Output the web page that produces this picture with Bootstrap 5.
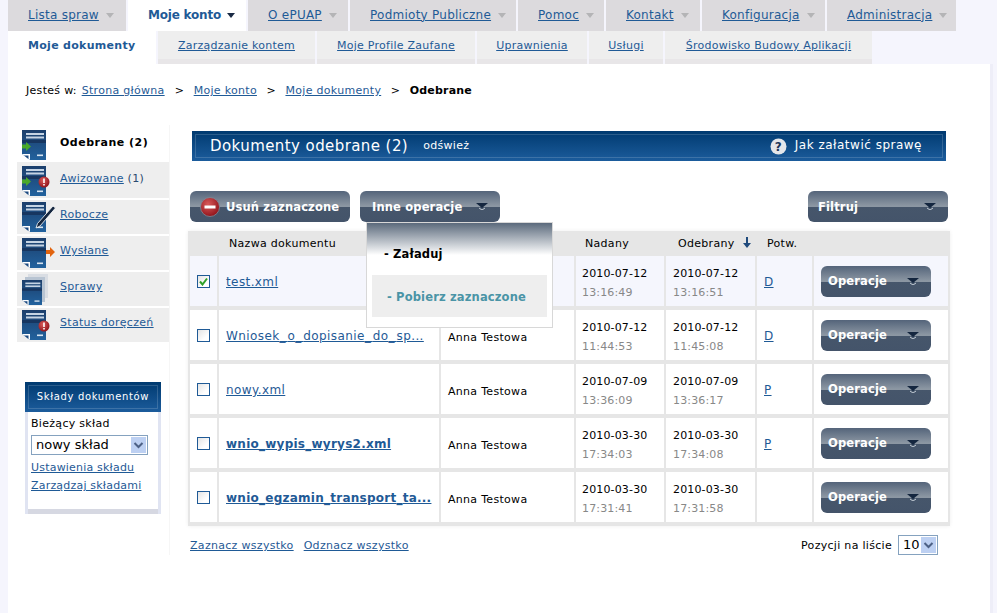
<!DOCTYPE html>
<html lang="pl">
<head>
<meta charset="utf-8">
<title>Dokumenty odebrane</title>
<link href="https://cdn.jsdelivr.net/npm/bootstrap@5.3.0/dist/css/bootstrap.min.css" rel="stylesheet">
<style>
html,body{height:613px;overflow:hidden}
body{background:#f5f5fd;font-family:"DejaVu Sans",Verdana,sans-serif;font-size:11px;line-height:1.3;color:#000;padding:0 4px 0 8px;letter-spacing:.3px}
a{color:#1f5a96}
.sprite{width:0;height:0;display:block}
.top-tabs{display:grid;grid-template-columns:118px 118px 100px 166px 86px 94px 123px 129px;gap:2px;height:31px;background:#f5f5fd}
.top-tab{background:#dcdadd;display:flex;align-items:center;font-size:12px;padding-left:20px;gap:7px;letter-spacing:.25px}
.top-tab.on{background:#fff;font-weight:700;gap:6px;letter-spacing:-.2px}
.top-tab.on a{text-decoration:none}
.tri{width:0;height:0;border-left:4.5px solid transparent;border-right:4.5px solid transparent;border-top:5px solid #b4b4b6}
.top-tab.on .tri{border-top-color:#1a2a44}
.sub-tabs{display:grid;grid-template-columns:148px 157px 158px 110px 74px 207px;gap:2px;width:864px;height:33px}
.sub-tab{background:linear-gradient(#eee 0,#eee 28px,#e8e6e8 28px);display:flex;align-items:center;justify-content:center;padding-bottom:3px;letter-spacing:.25px}
.sub-tab.on{background:#fff;font-weight:700;justify-content:flex-start;padding-left:20px;color:#1f5a96;letter-spacing:.3px}
.panel{background:#fff;height:560px;width:982px;box-shadow:3px 0 0 #eeeef8}
.crumb{padding:20px 0 0 18px;height:61px;display:flex;align-items:flex-start}
.crumb .sep{margin:0 10px}
.crumb .sep-a{margin:0 9.5px 0 10px}
.crumb .sep-b{margin:0 9.5px}
.crumb .gap-a{margin-left:1px}
.crumb b{letter-spacing:.2px}
.side{width:152px;margin-left:9px;flex:none;box-shadow:1px 0 0 #f6f6f6}
.side-item{display:flex;background:#eee;height:34px;margin-bottom:2px;padding:2px 0 0 5px;gap:11px}
.side-item.first{background:#fff;height:37px;margin:0;padding-top:5px}
.side-item.second{height:36px;padding-top:4px}
.side-item .lbl{padding-top:6px}
.side-item.first .lbl{font-weight:700;letter-spacing:.5px}
.lbl-n{color:#2a4a70}
.side-ico{width:27px;height:32px;flex:none;display:block;overflow:visible}
.store{margin:40px 0 0 8px;width:136px;height:132px;background:#fff;box-shadow:inset 3px 0 0 #e0e4f2,inset -3px 0 0 #e0e4f2,inset 0 -5px 0 #d6d8e2}
.store-head{height:30px;background:linear-gradient(#003a70,#1c5c9c);padding:3px}
.store-head div{height:24px;border:1px solid rgba(255,255,255,.16);color:#fff;font-size:10px;text-align:center;line-height:22px;letter-spacing:.65px}
.store-body{padding:5px 6px}
.store-body a{display:block;line-height:18px;letter-spacing:.2px}
.sel-wrap{position:relative;display:block;border:1px solid #85a2bf;background:#fff;height:20px}
.sel-wrap select{appearance:none;-webkit-appearance:none;border:0;background:transparent;width:100%;height:18px;font:13px/18px "DejaVu Sans",sans-serif;padding:0 0 0 4px;color:#000;letter-spacing:0;outline:0}
.sel-arrow{position:absolute;right:1px;top:1px;width:15px;height:16px;pointer-events:none}
.sel-big{width:117px;margin:4px 0 4px}
.sel-small{width:40px;margin-top:-2px}
.main{margin-left:19px;width:762px;position:relative}
.title-bar{margin:6px 0 0 4px;width:754px;height:30px;background:linear-gradient(#003a70,#1c5c9c);padding:3px;color:#fff}
.title-in{height:24px;border:1px solid rgba(255,255,255,.16);display:flex;align-items:center;padding:0 20px 0 14px}
.title-in h1{font-size:15px;font-weight:400;margin:0 15px 0 0;letter-spacing:.42px}
.title-help{margin-left:auto;display:flex;align-items:center;gap:8px;font-size:12px;letter-spacing:.5px}
.tool-row{display:flex;margin:30px 0 9px 2px;width:758px;height:31px}
.btn-slate{position:relative;display:flex;align-items:center;height:31px;border:0;border-radius:6px;padding:2px 0 0 10px;color:#fff;font-weight:700;font-size:11.5px;letter-spacing:.15px;background:linear-gradient(#54647a 0,#8c97a3 15px,#8c97a3 15.5px,#46566b 16px,#44546a 100%)}
.btn-slate:hover,.btn-slate:active{color:#fff;background:linear-gradient(#54647a 0,#8c97a3 15px,#46566b 16px,#44546a 100%)}
.btn-slate svg:first-child{margin-top:-2px}
.btn-del{width:160px;gap:6px}
.btn-other{width:140px;padding-left:12px}
.btn-filter{width:140px;margin-left:auto}
.btn-op{width:110px;padding-left:7px;padding-right:0}
.caret-x{position:absolute;right:12px;top:14px;width:12px;height:7px}
.btn-gap{margin-left:10px}
.drop-host{position:relative}
.menu-x.dropdown-menu{left:6px;top:31px;width:187px;height:106px;margin:0;padding:0;border:1px solid #d8d8d8;border-radius:0;min-width:0;background:linear-gradient(#5b6a7c 0,#fff 32px);font-size:11.5px;letter-spacing:.15px;z-index:5}
.menu-load{padding:24px 0 0 17px;font-weight:700;height:52px;color:#000}
.menu-get{margin:0 5px;height:42px;background:#eee;color:#4a94a6;font-weight:700;display:flex;align-items:center;padding:2px 0 0 15px}
.docs{width:762px;table-layout:fixed;border-collapse:separate;border-spacing:2px 4px;background:#e6e6e6;box-shadow:0 0 4px #eee}
.docs th{font-weight:400;height:17px;padding:1px 0 0 10px;vertical-align:middle;white-space:nowrap}
.docs th.hd-sent{padding-left:9px}
.docs th.hd-rec{padding-left:12px}
.docs td{background:#fff;height:50px;vertical-align:middle;padding:4px 0 0 7px;white-space:nowrap;overflow:hidden}
.docs td:first-child,.docs td:last-child{padding-top:0}
.docs tr.sel td{background:#f5f6fd}
.docs .c1{width:27px}.docs .c2{width:220px}.docs .c3{width:133px}.docs .c4{width:88px}.docs .c5{width:89px}.docs .c6{width:55px}.docs .c7{width:134px}
.doc-name{font-size:12px;letter-spacing:.4px}
.doc-name.bold{font-weight:700;letter-spacing:.25px}
.us{letter-spacing:2px}
.doc-name.bold .us{letter-spacing:.25px}
.docs td.who{padding-top:6px}
.when{line-height:19px;letter-spacing:.15px}
.docs td.when-a{padding-left:6px}
.when span{color:#888;display:block}
.docs td.conf{padding-left:7px;font-size:12px}
.chk{appearance:none;-webkit-appearance:none;display:block;margin:0;width:13px;height:13px;border:1px solid #1f5a96;background:linear-gradient(135deg,#e4e4e4,#fff 70%);position:relative}
.chk-on{display:block;position:relative;width:13px;height:13px}
.chk-on svg{position:absolute;left:2px;top:2px;width:9px;height:9px}
.foot{display:flex;align-items:flex-start;width:748px;margin:11px 0 0 2px}
.foot>a{margin-right:10px;padding-top:2px}
.foot .count{margin-left:auto;display:flex;align-items:center;gap:6px}
.sort{margin-left:8px;vertical-align:-1px}
</style>
</head>
<body>
<svg class="sprite" aria-hidden="true">
<defs>
<linearGradient id="pg" x1="0" y1="0" x2="0" y2="1"><stop offset="0" stop-color="#1c3f6c"/><stop offset="1" stop-color="#22629e"/></linearGradient>
<radialGradient id="rd" cx=".4" cy=".35" r=".7"><stop offset="0" stop-color="#d85a5a"/><stop offset="1" stop-color="#8e1018"/></radialGradient>
<symbol id="page" viewBox="0 0 24 30">
<path d="M0 0H24V30H8L0 24Z" fill="url(#pg)"/>
<path d="M0 24H8V30Z" fill="#fff"/><path d="M2 25.5H6.500V29Z" fill="#1d4a80"/>
<rect x="4" y="3" width="18" height="2" fill="#c5d4e4"/><rect x="4" y="6.500" width="18" height="2" fill="#c5d4e4"/>
<rect x="0" y="10" width="24" height="3" fill="#173660"/>
<rect x="15" y="24.500" width="6" height="1.600" fill="#d8e4f0"/>
</symbol>
</defs>
</svg>
<div class="top-tabs">
<div class="top-tab"><a href="#">Lista spraw</a><i class="tri"></i></div>
<div class="top-tab on"><a href="#">Moje konto</a><i class="tri"></i></div>
<div class="top-tab"><a href="#">O ePUAP</a><i class="tri"></i></div>
<div class="top-tab"><a href="#">Podmioty Publiczne</a><i class="tri"></i></div>
<div class="top-tab"><a href="#">Pomoc</a><i class="tri"></i></div>
<div class="top-tab"><a href="#">Kontakt</a><i class="tri"></i></div>
<div class="top-tab"><a href="#">Konfiguracja</a><i class="tri"></i></div>
<div class="top-tab"><a href="#">Administracja</a><i class="tri"></i></div>
</div>
<div class="sub-tabs">
<div class="sub-tab on">Moje dokumenty</div>
<div class="sub-tab"><a href="#">Zarządzanie kontem</a></div>
<div class="sub-tab"><a href="#">Moje Profile Zaufane</a></div>
<div class="sub-tab"><a href="#">Uprawnienia</a></div>
<div class="sub-tab"><a href="#">Usługi</a></div>
<div class="sub-tab"><a href="#">Środowisko Budowy Aplikacji</a></div>
</div>
<div class="panel">
<div class="crumb">Jesteś w:&nbsp;<a class="gap-a" href="#">Strona główna</a><span class="sep sep-a">&gt;</span><a href="#">Moje konto</a><span class="sep sep-b">&gt;</span><a href="#">Moje dokumenty</a><span class="sep sep-b">&gt;</span><b>Odebrane</b></div>
<div class="d-flex">
<div class="side">
<div class="side-item first"><svg class="side-ico" viewBox="0 0 27 32"><use href="#page" width="24" height="30"/><path d="M0 14.500H4V12L9 16.500L4 21V18.500H0Z" fill="#4aaa2a"/></svg><span class="lbl">Odebrane (2)</span></div>
<div class="side-item second"><svg class="side-ico" viewBox="0 0 27 32"><use href="#page" width="24" height="30"/><path d="M0 13.500H4V11L9 15.500L4 20V17.500H0Z" fill="#4aaa2a"/><circle cx="22" cy="16" r="5.500" fill="url(#rd)"/><rect x="21.200" y="12.500" width="1.600" height="4.500" fill="#fff"/><rect x="21.200" y="18" width="1.600" height="1.500" fill="#fff"/></svg><span class="lbl"><a href="#">Awizowane</a> <span class="lbl-n">(1)</span></span></div>
<div class="side-item"><svg class="side-ico" viewBox="0 0 27 32"><use href="#page" width="24" height="30"/><path d="M31 4L33.500 6L18 24L14 26L15.500 21.500Z" fill="#14263f" stroke="#fff" stroke-width=".8"/></svg><span class="lbl"><a href="#">Robocze</a></span></div>
<div class="side-item"><svg class="side-ico" viewBox="0 0 27 32"><use href="#page" width="24" height="30"/><path d="M24 12H28V9L33 14L28 19V16H24Z" fill="#e2640f"/></svg><span class="lbl"><a href="#">Wysłane</a></span></div>
<div class="side-item"><svg class="side-ico" viewBox="0 0 27 32"><path d="M6 0H26V24H6Z" fill="#d9dde3"/><path d="M3 3H23V28H3Z" fill="#b8c4d2"/><use href="#page" width="20" height="25" y="6"/></svg><span class="lbl"><a href="#">Sprawy</a></span></div>
<div class="side-item"><svg class="side-ico" viewBox="0 0 27 32"><use href="#page" width="24" height="30"/><circle cx="22" cy="16" r="5.500" fill="url(#rd)"/><rect x="21.200" y="12.500" width="1.600" height="4.500" fill="#fff"/><rect x="21.200" y="18" width="1.600" height="1.500" fill="#fff"/></svg><span class="lbl"><a href="#">Status doręczeń</a></span></div>
<div class="store">
<div class="store-head"><div>Składy dokumentów</div></div>
<div class="store-body">
Bieżący skład
<div class="sel-wrap sel-big"><select aria-label="Bieżący skład"><option>nowy skład</option></select><svg class="sel-arrow" viewBox="0 0 15 16"><rect width="15" height="16" fill="#bdd0f2"/><path d="M3.500 6L7.500 10L11.500 6" fill="none" stroke="#4d6185" stroke-width="2"/></svg></div>
<a href="#">Ustawienia składu</a>
<a href="#">Zarządzaj składami</a>
</div>
</div>
</div>
<div class="main">
<div class="title-bar"><div class="title-in"><h1>Dokumenty odebrane (2)</h1><span>odśwież</span>
<div class="title-help"><svg width="17" height="17" viewBox="0 0 17 17"><circle cx="8.500" cy="8.500" r="8" fill="#e4e6ea"/><text x="8.500" y="13" text-anchor="middle" font-size="12" font-weight="700" fill="#1c3458" font-family="DejaVu Sans">?</text></svg><span>Jak załatwić sprawę</span></div></div></div>
<div class="tool-row">
<button type="button" class="btn btn-slate btn-del"><svg width="20" height="20" viewBox="0 0 20 20"><circle cx="10" cy="10" r="9.500" fill="url(#rd)" stroke="#7f8a98" stroke-width=".8"/><rect x="4.500" y="8.500" width="11" height="3" fill="#fff"/></svg>Usuń zaznaczone</button>
<div class="dropdown drop-host btn-gap">
<button type="button" class="btn btn-slate btn-other">Inne operacje<svg class="caret-x" viewBox="0 0 12 7"><path d="M0 0H12L6 5Z" fill="#14263f"/><path d="M3 5L6 7L9 5" fill="none" stroke="#c3ccd6" stroke-width="1"/></svg></button>
<div class="dropdown-menu show menu-x"><div class="menu-load">- Załaduj</div><div class="menu-get">- Pobierz zaznaczone</div></div>
</div>
<button type="button" class="btn btn-slate btn-filter">Filtruj<svg class="caret-x" viewBox="0 0 12 7"><path d="M0 0H12L6 5Z" fill="#14263f"/><path d="M3 5L6 7L9 5" fill="none" stroke="#c3ccd6" stroke-width="1"/></svg></button>
</div>
<table class="docs">
<colgroup><col class="c1"><col class="c2"><col class="c3"><col class="c4"><col class="c5"><col class="c6"><col class="c7"></colgroup>
<thead><tr><th></th><th>Nazwa dokumentu</th><th>Nadawca</th><th class="hd-sent">Nadany</th><th class="hd-rec">Odebrany<svg class="sort" width="8" height="11" viewBox="0 0 8 11"><path d="M3 0H5V6H8L4 11L0 6H3Z" fill="#1f4a7c"/></svg></th><th>Potw.</th><th></th></tr></thead>
<tbody>
<tr class="sel"><td><span class="chk-on"><input class="chk" type="checkbox" checked aria-label="Zaznacz"><svg viewBox="0 0 9 9"><path d="M1 4.500L3.500 7.500L8 1.500" fill="none" stroke="#2fa02a" stroke-width="2"/></svg></span></td><td><a class="doc-name" href="#">test.xml</a></td><td class="who"></td><td class="when when-a">2010-07-12<span>13:16:49</span></td><td class="when">2010-07-12<span>13:16:51</span></td><td class="conf"><a href="#">D</a></td><td><button type="button" class="btn btn-slate btn-op">Operacje<svg class="caret-x" viewBox="0 0 12 7"><path d="M0 0H12L6 5Z" fill="#14263f"/><path d="M3 5L6 7L9 5" fill="none" stroke="#c3ccd6" stroke-width="1"/></svg></button></td></tr>
<tr><td><input class="chk" type="checkbox" aria-label="Zaznacz"></td><td><a class="doc-name" href="#">Wniosek<span class="us">_</span>o<span class="us">_</span>dopisanie<span class="us">_</span>do<span class="us">_</span>sp...</a></td><td class="who">Anna Testowa</td><td class="when when-a">2010-07-12<span>11:44:53</span></td><td class="when">2010-07-12<span>11:45:08</span></td><td class="conf"><a href="#">D</a></td><td><button type="button" class="btn btn-slate btn-op">Operacje<svg class="caret-x" viewBox="0 0 12 7"><path d="M0 0H12L6 5Z" fill="#14263f"/><path d="M3 5L6 7L9 5" fill="none" stroke="#c3ccd6" stroke-width="1"/></svg></button></td></tr>
<tr><td><input class="chk" type="checkbox" aria-label="Zaznacz"></td><td><a class="doc-name" href="#">nowy.xml</a></td><td class="who">Anna Testowa</td><td class="when when-a">2010-07-09<span>13:36:09</span></td><td class="when">2010-07-09<span>13:36:17</span></td><td class="conf"><a href="#">P</a></td><td><button type="button" class="btn btn-slate btn-op">Operacje<svg class="caret-x" viewBox="0 0 12 7"><path d="M0 0H12L6 5Z" fill="#14263f"/><path d="M3 5L6 7L9 5" fill="none" stroke="#c3ccd6" stroke-width="1"/></svg></button></td></tr>
<tr><td><input class="chk" type="checkbox" aria-label="Zaznacz"></td><td><a class="doc-name bold" href="#">wnio<span class="us">_</span>wypis<span class="us">_</span>wyrys2.xml</a></td><td class="who">Anna Testowa</td><td class="when when-a">2010-03-30<span>17:34:03</span></td><td class="when">2010-03-30<span>17:34:08</span></td><td class="conf"><a href="#">P</a></td><td><button type="button" class="btn btn-slate btn-op">Operacje<svg class="caret-x" viewBox="0 0 12 7"><path d="M0 0H12L6 5Z" fill="#14263f"/><path d="M3 5L6 7L9 5" fill="none" stroke="#c3ccd6" stroke-width="1"/></svg></button></td></tr>
<tr><td><input class="chk" type="checkbox" aria-label="Zaznacz"></td><td><a class="doc-name bold" href="#">wnio<span class="us">_</span>egzamin<span class="us">_</span>transport<span class="us">_</span>ta...</a></td><td class="who">Anna Testowa</td><td class="when when-a">2010-03-30<span>17:31:41</span></td><td class="when">2010-03-30<span>17:31:58</span></td><td class="conf"></td><td><button type="button" class="btn btn-slate btn-op">Operacje<svg class="caret-x" viewBox="0 0 12 7"><path d="M0 0H12L6 5Z" fill="#14263f"/><path d="M3 5L6 7L9 5" fill="none" stroke="#c3ccd6" stroke-width="1"/></svg></button></td></tr>
</tbody>
</table>
<div class="foot"><a href="#">Zaznacz wszystko</a><a href="#">Odznacz wszystko</a>
<div class="count">Pozycji na liście<div class="sel-wrap sel-small"><select aria-label="Pozycji na liście"><option>10</option></select><svg class="sel-arrow" viewBox="0 0 15 16"><rect width="15" height="16" fill="#bdd0f2"/><path d="M3.500 6L7.500 10L11.500 6" fill="none" stroke="#4d6185" stroke-width="2"/></svg></div></div></div>
</div>
</div>
</div>
<script src="https://cdn.jsdelivr.net/npm/bootstrap@5.3.0/dist/js/bootstrap.bundle.min.js"></script>
</body>
</html>
